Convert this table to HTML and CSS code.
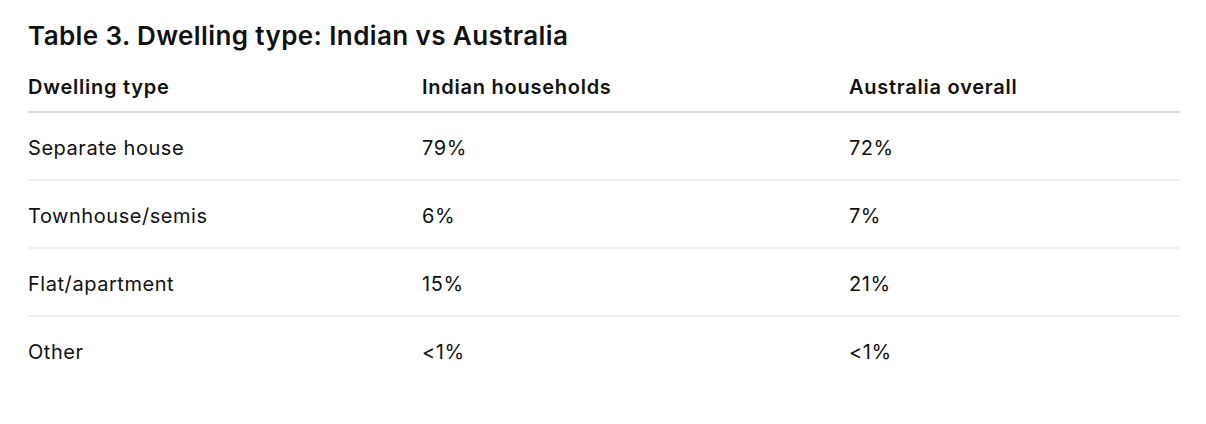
FILE: index.html
```html
<!DOCTYPE html>
<html lang="en">
<head>
<meta charset="utf-8">
<title>Table 3. Dwelling type</title>
<link rel="stylesheet" href="styles.css">
</head>
<body>
<div class="wrap">
  <h1 class="title">Table 3. Dwelling type: Indian vs Australia</h1>
  <table class="data">
    <thead>
      <tr>
        <th class="c1">Dwelling type</th>
        <th class="c2">Indian households</th>
        <th class="c3">Australia overall</th>
      </tr>
    </thead>
    <tbody>
      <tr><td>Separate house</td><td>79%</td><td>72%</td></tr>
      <tr><td>Townhouse/semis</td><td>6%</td><td>7%</td></tr>
      <tr><td>Flat/apartment</td><td>15%</td><td>21%</td></tr>
      <tr><td>Other</td><td>&lt;1%</td><td>&lt;1%</td></tr>
    </tbody>
  </table>
</div>
</body>
</html>
```
FILE: styles.css
```css
html, body {
  margin: 0;
  padding: 0;
  background: #ffffff;
}
body {
  font-family: Inter, "Noto Sans", sans-serif;
  color: #111111;
}
.wrap {
  padding: 18px 26px 0 28px;
}
.title {
  margin: 0;
  font-size: 26px;
  font-weight: 600;
  line-height: 36px;
  letter-spacing: 0.4px;
}
.data {
  width: 1152px;
  border-collapse: collapse;
  margin-top: 11px;
  table-layout: fixed;
}
.data th {
  text-align: left;
  font-size: 20px;
  font-weight: 600;
  letter-spacing: 0.75px;
  height: 44px;
  padding: 0 0 2px 0;
  vertical-align: middle;
  border-bottom: 2px solid #dcdcdc;
}
.data td {
  font-size: 20px;
  font-weight: 400;
  letter-spacing: 0.55px;
  height: 63px;
  padding: 3px 0 0 0;
  vertical-align: middle;
  border-bottom: 2px solid #f0f0f0;
}
.data tbody tr:last-child td {
  border-bottom: none;
}
.c1 { width: 394px; }
.c2 { width: 427px; }
.c3 { width: 331px; }
```
